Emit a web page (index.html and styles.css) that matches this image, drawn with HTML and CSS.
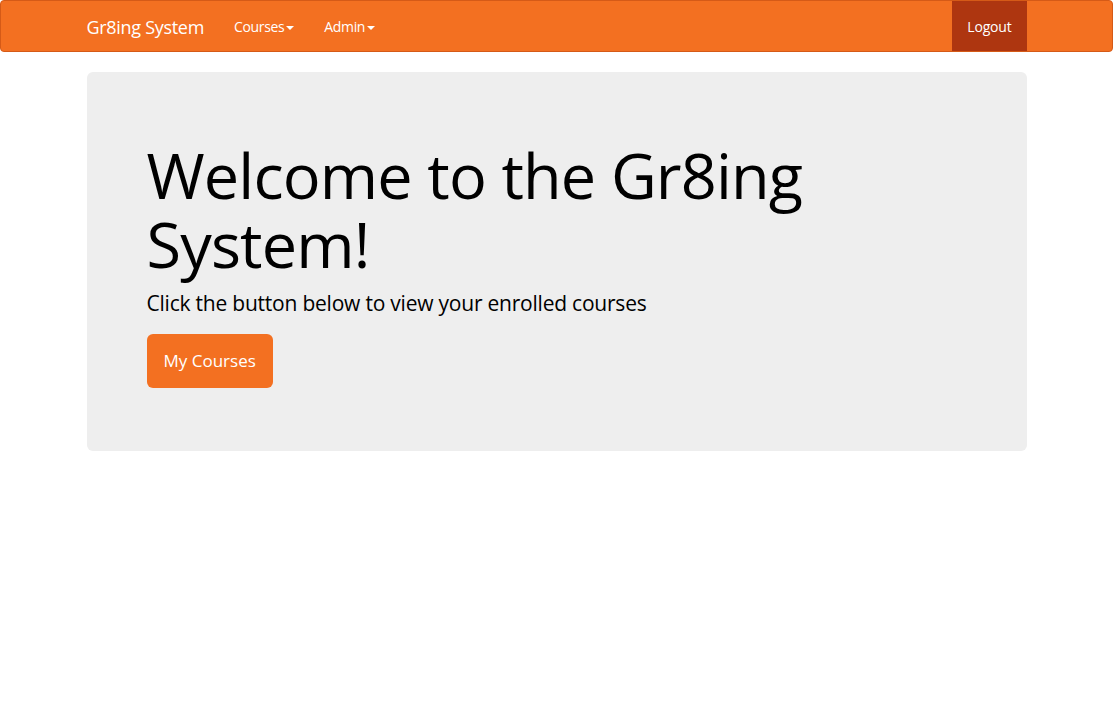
FILE: index.html
```html
<!DOCTYPE html>
<html>
<head>
<meta charset="utf-8">
<link rel="stylesheet" href="styles.css">
</head>
<body>
<nav class="navbar">
  <div class="container nav-inner">
    <div class="nav-left">
      <a class="brand" href="#">Gr8ing System</a>
      <ul class="nav">
        <li><a href="#">Courses<span class="caret"></span></a></li>
        <li><a href="#">Admin<span class="caret"></span></a></li>
      </ul>
    </div>
    <ul class="nav nav-right">
      <li class="active"><a href="#">Logout</a></li>
    </ul>
  </div>
</nav>
<div class="container">
  <div class="jumbotron">
    <h1>Welcome to the Gr8ing System!</h1>
    <p>Click the button below to view your enrolled courses</p>
    <p class="actions"><a class="btn" href="#">My Courses</a></p>
  </div>
</div>
</body>
</html>
```
FILE: styles.css
```css
* { box-sizing: border-box; }
html, body { margin: 0; padding: 0; }
body {
  font-family: "Open Sans", "DejaVu Sans", sans-serif;
  font-size: 14px;
  line-height: 1.42857;
  color: #333;
  background: #fff;
}
a { text-decoration: none; }
.container {
  width: 970px;
  margin: 0 auto;
  padding: 0 15px;
}
.navbar {
  background: #f37021;
  border: 1px solid #d55a17;
  border-radius: 4px;
  min-height: 52px;
  margin-bottom: 20px;
}
.nav-inner {
  display: flex;
  justify-content: space-between;
  align-items: stretch;
  height: 50px;
}
.nav-left { display: flex; margin-left: -15px; }
.brand {
  color: #fff;
  font-size: 18px;
  line-height: 20px;
  padding: 16px 15px 14px;
  height: 50px;
  letter-spacing: -0.3px;
}
.nav {
  list-style: none;
  margin: 0;
  padding: 0;
  display: flex;
}
.nav li a {
  display: block;
  color: #fff;
  padding: 16px 15px 14px;
  line-height: 20px;
  height: 50px;
  letter-spacing: -0.35px;
}
.nav-right { margin-right: 0; }
.nav-right li.active a { background: #ae3610; letter-spacing: -0.2px; }
.caret {
  display: inline-block;
  width: 0; height: 0;
  margin-left: 2px;
  vertical-align: middle;
  border-top: 4px solid #fff;
  border-left: 4px solid transparent;
  border-right: 4px solid transparent;
}
.jumbotron {
  background: #eeeeee;
  border-radius: 6px;
  padding: 48px 60px;
  color: #000;
}
.jumbotron h1 {
  font-size: 63px;
  font-weight: 400;
  line-height: 1.1;
  margin: 20px 0 10px;
  color: #000;
  letter-spacing: -0.85px;
}
.jumbotron p {
  font-size: 21px;
  font-weight: 400;
  margin: 0 0 15px;
  letter-spacing: -0.22px;
}
.jumbotron p.actions { letter-spacing: 0; line-height: 0; }
.btn {
  display: inline-block;
  background: #f37021;
  color: #fff;
  font-size: 17px;
  line-height: 26px;
  padding: 14px 17px 14px 17px;
  border-radius: 6px;
  vertical-align: top;
  letter-spacing: 0;
}
```
